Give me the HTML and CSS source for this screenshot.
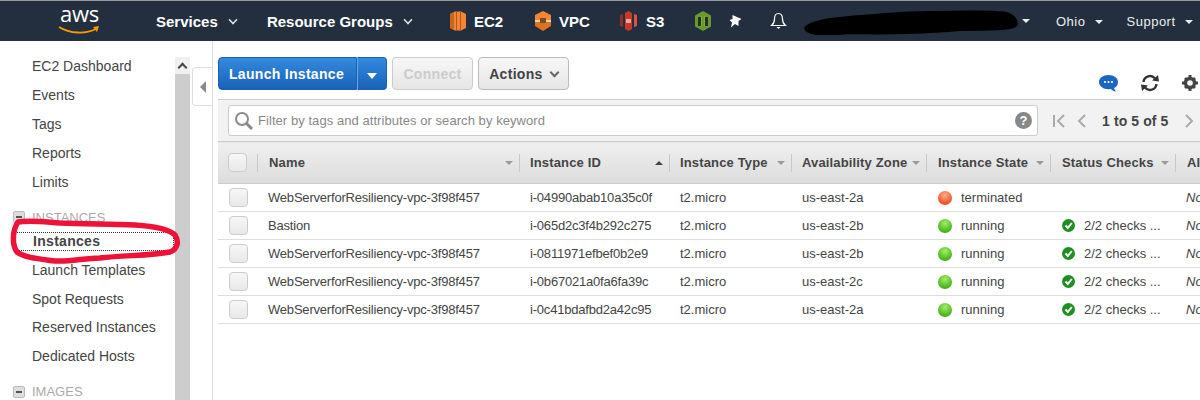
FILE: index.html
```html
<!DOCTYPE html>
<html lang="en">
<head>
    <meta charset="UTF-8">
    <title>EC2 Management Console</title>
    <link rel="stylesheet" href="styles.css">
</head>
<body>

    <header class="topbar">
        <div class="logo">
            <span class="logo-text">aws</span>
            <svg class="logo-smile" width="42" height="11" viewBox="0 0 42 11">
                <path d="M1 2 C12 9 28 9 38 4" fill="none" stroke="#f90" stroke-width="1.800"/>
                <path d="M35 2 L41 1 L39 7 Z" fill="#f90"/>
            </svg>
        </div>
        <a class="nav-menu nav-services">Services <i class="chevron"></i></a>
        <a class="nav-menu nav-groups">Resource Groups <i class="chevron"></i></a>

        <a class="shortcut shortcut-ec2">
            <svg width="18" height="20" viewBox="0 0 18 20">
                <path d="M6 .5 L1 3 V17 L6 19.500 H12 L17 17 V3 L12 .5 Z" fill="#f58536"/>
                <path d="M1 3 L5 1 V19 L1 17 Z" fill="#c8681f"/>
                <path d="M7 1 H8 V19 H7 Z M11 1 H12 V19 H11 Z" fill="#b5591a"/>
            </svg>
            EC2
        </a>
        <a class="shortcut shortcut-vpc">
            <svg width="18" height="20" viewBox="0 0 18 20">
                <path d="M9 0 L17 4 V9 H1 V4 Z" fill="#f58536"/>
                <path d="M1 11 H17 V15 L9 20 L1 15 Z" fill="#d9741f"/>
                <path d="M1 9 H17 V11 H1 Z" fill="#f4d5b0"/>
                <path d="M6 7 H12 V12 H6 Z" fill="#7a4a20"/>
            </svg>
            VPC
        </a>
        <a class="shortcut shortcut-s3">
            <svg width="17" height="20" viewBox="0 0 17 20">
                <path d="M0 4 L3 3 V16 L0 15 Z" fill="#8c3123"/>
                <path d="M17 4 L14 3 V16 L17 15 Z" fill="#e05243"/>
                <path d="M5 2 L8.500 0 L12 2 V18 L8.500 20 L5 18 Z" fill="#c7372c"/>
                <path d="M6 8 H11 V12 H6 Z" fill="#f0a79e"/>
            </svg>
            S3
        </a>
        <svg class="shortcut-green" width="18" height="20" viewBox="0 0 18 20">
            <path d="M9 0 L17 4.500 V15.500 L9 20 L1 15.500 V4.500 Z" fill="#6b9a2c"/>
            <path d="M4 6 H8 V15 H4 Z M10 6 H14 V15 H10 Z" fill="#26331f"/>
            <path d="M7 5 H8 V15 H7 Z M10 5 H11 V15 H10 Z" fill="#7fae3a"/>
        </svg>
        <svg class="pin" width="13" height="13" viewBox="0 0 13 13">
            <path d="M3.500 0 L12.500 4 L9.500 6 L9.500 11 L6 9 L2 12.500 L3 7.500 L.5 5 L3.500 4 Z" fill="#fff"/>
        </svg>
        <svg class="bell" width="17" height="18" viewBox="0 0 17 18">
            <path d="M8.500 1.500 C5 1.500 4.500 4 4.500 7 C4.500 10 3.500 12 1.500 13.500 H15.500 C13.500 12 12.500 10 12.500 7 C12.500 4 12 1.500 8.500 1.500 Z" fill="none" stroke="#fff" stroke-width="1.200"/>
            <path d="M6.500 15 H10.500 L8.500 17 Z" fill="#fff"/>
        </svg>

        <div class="account">
            <svg class="redacted" width="218" height="28" viewBox="0 0 218 28">
                <path d="M3 21 C10 12 40 10 97 6 C130 5 170 4 195 5 C208 5 214 10 215 17 C215 22 200 23 157 23 C130 26 80 27 47 26 C30 28 5 30 3 21 Z" fill="#000" stroke="#000" stroke-width="2" stroke-linejoin="round"/>
            </svg>
            <i class="caret-small"></i>
        </div>
        <a class="nav-plain nav-region">Ohio <i class="caret-small"></i></a>
        <a class="nav-plain nav-support">Support <i class="caret-small"></i></a>
    </header>

    <div class="page">
        <nav class="sidebar">
            <a class="side-link">EC2 Dashboard</a>
            <a class="side-link">Events</a>
            <a class="side-link">Tags</a>
            <a class="side-link">Reports</a>
            <a class="side-link">Limits</a>
            <div class="side-group"><i class="minus-box"></i>INSTANCES</div>
            <a class="side-link selected">Instances</a>
            <a class="side-link">Launch Templates</a>
            <a class="side-link">Spot Requests</a>
            <a class="side-link">Reserved Instances</a>
            <a class="side-link">Dedicated Hosts</a>
            <div class="side-group"><i class="minus-box"></i>IMAGES</div>
        </nav>

        <div class="side-scroll">
            <div class="scroll-up"><i class="scroll-arrow"></i></div>
            <div class="scroll-thumb"></div>
        </div>

        <div class="collapse-strip">
            <div class="collapse-tab"><i class="collapse-arrow"></i></div>
        </div>

        <main class="main">
            <div class="toolbar">
                <div class="split-btn">
                    <button class="btn-primary">Launch Instance</button>
                    <button class="btn-primary-caret"><i class="caret-white"></i></button>
                </div>
                <button class="btn btn-disabled">Connect</button>
                <button class="btn btn-actions">Actions <i class="chevron-dark"></i></button>
                <div class="tool-icons">
                    <svg width="19" height="17" viewBox="0 0 19 17">
                        <path d="M9.500 0 C15 0 19 3 19 7 C19 10 17 12.500 15 13 C15.500 14.500 16.500 16 17.500 16.500 C15 16.500 13 15.500 12 14 C11 14.200 10.500 14.200 9.500 14.200 C4 14.200 0 11 0 7 C0 3 4 0 9.500 0 Z" fill="#1a66c0"/>
                        <circle cx="6" cy="7" r="1.100" fill="#fff"/>
                        <circle cx="9.500" cy="7" r="1.100" fill="#fff"/>
                        <circle cx="13" cy="7" r="1.100" fill="#fff"/>
                    </svg>
                    <svg width="20" height="18" viewBox="0 0 20 18">
                        <path d="M3.500 8 A6.500 6.500 0 0 1 15 4.500" fill="none" stroke="#333" stroke-width="2.400"/>
                        <path d="M12 6.500 L19 7.500 L18 1 Z" fill="#333"/>
                        <path d="M16.500 10 A6.500 6.500 0 0 1 5 13.500" fill="none" stroke="#333" stroke-width="2.400"/>
                        <path d="M8 11.500 L1 10.500 L2 17 Z" fill="#333"/>
                    </svg>
                    <svg width="16" height="16" viewBox="0 0 16 16">
                        <circle cx="8" cy="8" r="4.500" fill="none" stroke="#444" stroke-width="3.400"/>
                        <path d="M6.500 0 H9.500 V3 H6.500 Z M6.500 13 H9.500 V16 H6.500 Z M0 6.500 H3 V9.500 H0 Z M13 6.500 H16 V9.500 H13 Z" fill="#444"/>
                        <path d="M2 4 L4 2 L6 4 L4 6 Z M10 4 L12 2 L14 4 L12 6 Z M2 12 L4 10 L6 12 L4 14 Z M10 12 L12 10 L14 12 L12 14 Z" fill="#444"/>
                    </svg>
                </div>
            </div>

            <div class="filter-bar">
                <div class="filter-input">
                    <svg width="20" height="20" viewBox="0 0 20 20">
                        <circle cx="8" cy="8" r="6" fill="none" stroke="#8a8a8a" stroke-width="2"/>
                        <path d="M12.500 12.500 L18 18" stroke="#8a8a8a" stroke-width="3"/>
                    </svg>
                    <span class="filter-text">Filter by tags and attributes or search by keyword</span>
                    <span class="help-icon">?</span>
                </div>
                <div class="pager">
                    <svg width="14" height="14" viewBox="0 0 14 14">
                        <path d="M2 1 V13 M12 1 L6 7 L12 13" fill="none" stroke="#aaa" stroke-width="2"/>
                    </svg>
                    <svg class="pager-prev" width="10" height="14" viewBox="0 0 10 14">
                        <path d="M8 1 L2 7 L8 13" fill="none" stroke="#aaa" stroke-width="2"/>
                    </svg>
                    <span class="pager-text">1 to 5 of 5</span>
                    <svg class="pager-next" width="10" height="14" viewBox="0 0 10 14">
                        <path d="M2 1 L8 7 L2 13" fill="none" stroke="#aaa" stroke-width="2"/>
                    </svg>
                </div>
            </div>

            <table class="instances">
                <colgroup>
                    <col class="col-check"><col class="col-name"><col class="col-id"><col class="col-type">
                    <col class="col-zone"><col class="col-state"><col class="col-status"><col class="col-alarm">
                </colgroup>
                <thead>
                    <tr>
                        <th><i class="check head-check"></i></th>
                        <th><div class="th-cell">Name <i class="sort-down"></i></div></th>
                        <th><div class="th-cell th-tight">Instance ID <i class="sort-up"></i></div></th>
                        <th><div class="th-cell th-tight">Instance Type <i class="sort-down"></i></div></th>
                        <th><div class="th-cell th-tight">Availability Zone <i class="sort-down"></i></div></th>
                        <th><div class="th-cell">Instance State <i class="sort-down"></i></div></th>
                        <th><div class="th-cell">Status Checks <i class="sort-down"></i></div></th>
                        <th><div class="th-cell">Alarm Status</div></th>
                    </tr>
                </thead>
                <tbody id="instanceRows"></tbody>
            </table>
        </main>
    </div>

    <svg class="scribble" width="184" height="50" viewBox="0 0 184 50">
        <path d="M18 5 C30 3 45 5 60 6 C85 7 110 7 135 8 C150 9 168 11 175 18 C179 24 178 32 170 35 C150 39 125 38 100 41 C85 41 70 45 55 44 C40 42 25 41 17 35 C12 28 12 14 18 5 Z" fill="none" stroke="#ee1238" stroke-width="5.500" stroke-linejoin="round"/>
    </svg>

    <script>
      const instances = [
          ['WebServerforResiliency-vpc-3f98f457', 'i-04990abab10a35c0f', 'us-east-2a', 'terminated'],
          ['Bastion', 'i-065d2c3f4b292c275', 'us-east-2b', 'running'],
          ['WebServerforResiliency-vpc-3f98f457', 'i-0811971efbef0b2e9', 'us-east-2b', 'running'],
          ['WebServerforResiliency-vpc-3f98f457', 'i-0b67021a0fa6fa39c', 'us-east-2c', 'running'],
          ['WebServerforResiliency-vpc-3f98f457', 'i-0c41bdafbd2a42c95', 'us-east-2a', 'running']
      ];

      const checkIcon = '<svg class="check-ok" width="13" height="13" viewBox="0 0 13 13">' +
          '<circle cx="6.500" cy="6.500" r="6.500" fill="#1f8f24"/>' +
          '<path d="M3.500 6.500 L5.800 9 L9.800 4" fill="none" stroke="#fff" stroke-width="2"/></svg>';

      const rows = document.getElementById('instanceRows');
      instances.forEach(item => {
          const running = item[3] === 'running';
          const row = document.createElement('tr');
          row.innerHTML =
              '<td><i class="check"></i></td>' +
              '<td class="cell-name">' + item[0] + '</td>' +
              '<td class="cell-id">' + item[1] + '</td>' +
              '<td class="cell-type">t2.micro</td>' +
              '<td class="cell-zone">' + item[2] + '</td>' +
              '<td class="cell-state"><i class="dot ' + item[3] + '"></i>' + item[3] + '</td>' +
              '<td class="cell-status">' + (running ? checkIcon + '2/2 checks ...' : '') + '</td>' +
              '<td class="cell-alarm">None</td>';
          rows.appendChild(row);
      });
    </script>
</body>
</html>
```

FILE: styles.css
```css
html, body {
    margin: 0;
    height: 400px;
    overflow: hidden;
}
body {
    position: relative;
    font-family: "Liberation Sans", Arial, sans-serif;
    font-size: 14px;
    color: #444;
    background-color: #fff;
}
i {
    display: inline-block;
}

/* top bar */
.topbar {
    display: flex;
    align-items: center;
    height: 40px;
    padding-left: 58px;
    box-sizing: content-box;
    background-color: #232f3e;
    border-top: 1px solid #999;
    color: #fff;
    white-space: nowrap;
}
.logo {
    display: flex;
    flex-direction: column;
    width: 44px;
    height: 36px;
    margin-right: 54px;
}
.logo-text {
    height: 20px;
    padding-left: 2px;
    font-family: "Open Sans", sans-serif;
    font-size: 22px;
    line-height: 20px;
    letter-spacing: -0.2px;
}
.logo-smile {
    margin-top: 2px;
}
.nav-menu {
    font-size: 15px;
    font-weight: bold;
}
.nav-services {
    margin-right: 30px;
}
.nav-groups {
    margin-right: 37px;
}
.chevron {
    width: 6px;
    height: 6px;
    margin: 0 0 3px 7px;
    border-right: 2px solid #ddd;
    border-bottom: 2px solid #ddd;
    transform: rotate(45deg) scale(0.8);
}
.shortcut {
    display: flex;
    align-items: center;
    gap: 7px;
    font-size: 15px;
    font-weight: bold;
}
.shortcut-ec2 {
    width: 85px;
}
.shortcut-vpc {
    width: 86px;
}
.shortcut-s3 {
    width: 74px;
    gap: 9px;
}
.pin {
    margin-left: 17px;
}
.bell {
    margin-left: 28px;
}
.account {
    display: flex;
    align-items: center;
    margin-left: 15px;
}
.caret-small {
    width: 0;
    height: 0;
    margin-left: 5px;
    border-left: 4px solid transparent;
    border-right: 4px solid transparent;
    border-top: 4px solid #eee;
}
.account .caret-small {
    margin-left: 2px;
}
.nav-plain {
    font-size: 13px;
    letter-spacing: 0.5px;
    color: #eee;
}
.nav-plain .caret-small {
    margin: 0 0 2px 5px;
}
.nav-region {
    margin-left: 26px;
}
.nav-support {
    margin-left: 24px;
}

/* page columns */
.page {
    display: flex;
    height: 359px;
}
.sidebar {
    width: 175px;
    flex: none;
    padding-top: 11px;
    box-sizing: border-box;
}
.side-link {
    display: block;
    height: 29px;
    margin-left: 16px;
    padding-left: 16px;
    line-height: 28px;
    white-space: nowrap;
}
.side-group ~ .side-link {
    height: 28.7px;
}
.side-link.selected {
    height: 17px;
    margin: 0 2px 6px 16px;
    padding-left: 17px;
    line-height: 17px;
    font-weight: bold;
    letter-spacing: 0.3px;
    outline: 1px dotted #333;
}
.side-group {
    display: flex;
    align-items: center;
    height: 18px;
    margin: 11px 0 7px 13px;
    font-size: 13px;
    color: #aaa;
}
.side-link + .side-group:last-child {
    margin-top: 12px;
}
.minus-box {
    position: relative;
    width: 10px;
    height: 10px;
    margin-right: 7px;
    background-color: #ddd;
    border: 1px solid #bbb;
    border-radius: 2px;
}
.minus-box::after {
    content: "";
    position: absolute;
    left: 2px;
    top: 4px;
    width: 6px;
    height: 2px;
    background-color: #555;
}
.side-scroll {
    display: flex;
    flex-direction: column;
    width: 15px;
    flex: none;
    padding-top: 16px;
}
.scroll-up {
    display: flex;
    justify-content: center;
    align-items: center;
    height: 17px;
    background-color: #f0f0f0;
}
.scroll-arrow {
    width: 5px;
    height: 5px;
    margin-top: 3px;
    border-left: 2px solid #444;
    border-top: 2px solid #444;
    transform: rotate(45deg);
}
.scroll-thumb {
    flex: 1;
    background-color: #cdcdcd;
}
.collapse-strip {
    width: 23px;
    flex: none;
    padding-top: 26px;
    box-sizing: border-box;
    border-right: 1px solid #ddd;
}
.collapse-tab {
    display: flex;
    align-items: center;
    justify-content: center;
    width: 20px;
    height: 39px;
    margin-left: 2px;
    box-sizing: border-box;
    border: 1px solid #ddd;
    border-right: none;
    border-radius: 4px 0 0 4px;
}
.collapse-arrow {
    width: 0;
    height: 0;
    border-top: 6px solid transparent;
    border-bottom: 6px solid transparent;
    border-right: 6px solid #888;
}

/* main panel */
.main {
    flex: 1;
    min-width: 0;
    padding-left: 5px;
}
.toolbar {
    display: flex;
    align-items: flex-start;
    height: 58px;
    padding-top: 16px;
    box-sizing: border-box;
}
.split-btn {
    display: flex;
    margin-right: 5px;
}
button {
    height: 33px;
    font-family: inherit;
    font-size: 14px;
    font-weight: bold;
    letter-spacing: 0.3px;
    padding: 0;
}
.btn-primary {
    width: 139px;
    padding-right: 2px;
    color: #fff;
    background: linear-gradient(#328ae0, #1a62b8);
    border: 1px solid #1a62b0;
    border-radius: 4px 0 0 4px;
}
.btn-primary-caret {
    width: 30px;
    background: linear-gradient(#328ae0, #1a62b8);
    border: 1px solid #1a62b0;
    border-left: 1px solid #6aa4e0;
    border-radius: 0 4px 4px 0;
}
.caret-white {
    width: 0;
    height: 0;
    border-left: 5px solid transparent;
    border-right: 5px solid transparent;
    border-top: 6px solid #fff;
}
.btn {
    background: linear-gradient(#f7f7f7, #e6e6e6);
    border: 1px solid #ccc;
    border-radius: 4px;
}
.btn-disabled {
    width: 81px;
    margin-right: 5px;
    color: #ccc;
}
.btn-actions {
    width: 91px;
    color: #444;
    border-color: #bbb;
}
.chevron-dark {
    width: 5px;
    height: 5px;
    margin: 0 0 3px 4px;
    border-right: 2px solid #666;
    border-bottom: 2px solid #666;
    transform: rotate(45deg);
}
.tool-icons {
    display: flex;
    align-items: center;
    gap: 22px;
    margin: 17px 0 0 auto;
    padding-right: 2px;
}

/* filter row */
.filter-bar {
    display: flex;
    align-items: flex-start;
    height: 42px;
    padding: 5px 0 0 10px;
    box-sizing: border-box;
    background-color: #f2f2f2;
    border-top: 1px solid #ccc;
}
.filter-input {
    display: flex;
    align-items: center;
    width: 810px;
    height: 31px;
    padding: 0 5px;
    box-sizing: border-box;
    background-color: #fff;
    border: 1px solid #ccc;
    border-radius: 3px;
}
.filter-text {
    flex: 1;
    margin-left: 4px;
    font-size: 13px;
    letter-spacing: 0.06px;
    color: #888;
}
.help-icon {
    width: 17px;
    height: 17px;
    font-weight: bold;
    font-size: 13px;
    line-height: 17px;
    text-align: center;
    color: #fff;
    background-color: #888;
    border-radius: 50%;
}
.pager {
    display: flex;
    align-items: center;
    height: 31px;
    margin-left: 14px;
}
.pager-prev {
    margin-left: 11px;
}
.pager-text {
    margin: 0 14px 0 15px;
    font-weight: bold;
    letter-spacing: 0.1px;
    white-space: nowrap;
}
.pager-next {
    margin-left: 2px;
}

/* table */
.instances {
    width: 982px;
    table-layout: fixed;
    border-collapse: collapse;
    font-size: 13px;
}
.col-check { width: 39px; }
.col-name { width: 262px; }
.col-id { width: 150px; }
.col-type { width: 122px; }
.col-zone { width: 135px; }
.col-state { width: 124px; }
.col-status { width: 125px; }
.col-alarm { width: 25px; }
th {
    height: 42px;
    padding: 0;
    text-align: left;
    background: linear-gradient(#efefef, #dcdcdc);
    border-top: 1px solid #ccc;
    border-bottom: 1px solid #ccc;
    box-sizing: border-box;
}
.th-cell {
    display: flex;
    align-items: center;
    justify-content: space-between;
    height: 18px;
    padding: 0 6px 0 11px;
    overflow: hidden;
    white-space: nowrap;
    letter-spacing: 0.15px;
    border-left: 1px solid #c8c8c8;
}
.th-tight {
    padding-left: 10px;
}
th:last-child .th-cell {
    width: 200px;
}
td {
    height: 28px;
    padding: 0 0 0 11px;
    box-sizing: border-box;
    white-space: nowrap;
    overflow: hidden;
    border-bottom: 1px solid #ddd;
}
.cell-name, .cell-id {
    letter-spacing: -0.2px;
}
.check {
    display: block;
    width: 19px;
    height: 19px;
    box-sizing: border-box;
    background: linear-gradient(#f7f7f7, #e8e8e8);
    border: 1px solid #ccc;
    border-radius: 4px;
}
.head-check {
    margin-left: 10px;
}
.sort-down, .sort-up {
    flex: none;
    width: 0;
    height: 0;
    border-left: 4px solid transparent;
    border-right: 4px solid transparent;
}
.sort-down {
    border-top: 4px solid #999;
}
.sort-up {
    border-bottom: 4px solid #444;
}
.cell-state {
    padding-left: 12px;
}
.cell-status {
    padding-left: 12px;
}
.dot {
    width: 14px;
    height: 14px;
    margin-right: 9px;
    vertical-align: -3px;
    border-radius: 50%;
}
.dot.running {
    background: radial-gradient(circle at 50% 30%, #a6ee6a, #4db81f 65%, #3a9c14);
}
.dot.terminated {
    background: radial-gradient(circle at 50% 30%, #ffb08a, #f2562a 65%, #d8431c);
}
.check-ok {
    margin-right: 9px;
    vertical-align: -2px;
}
.cell-alarm {
    font-style: italic;
}

/* red marker ring drawn over the sidebar */
.scribble {
    position: absolute;
    left: 0;
    top: 217px;
}
```
